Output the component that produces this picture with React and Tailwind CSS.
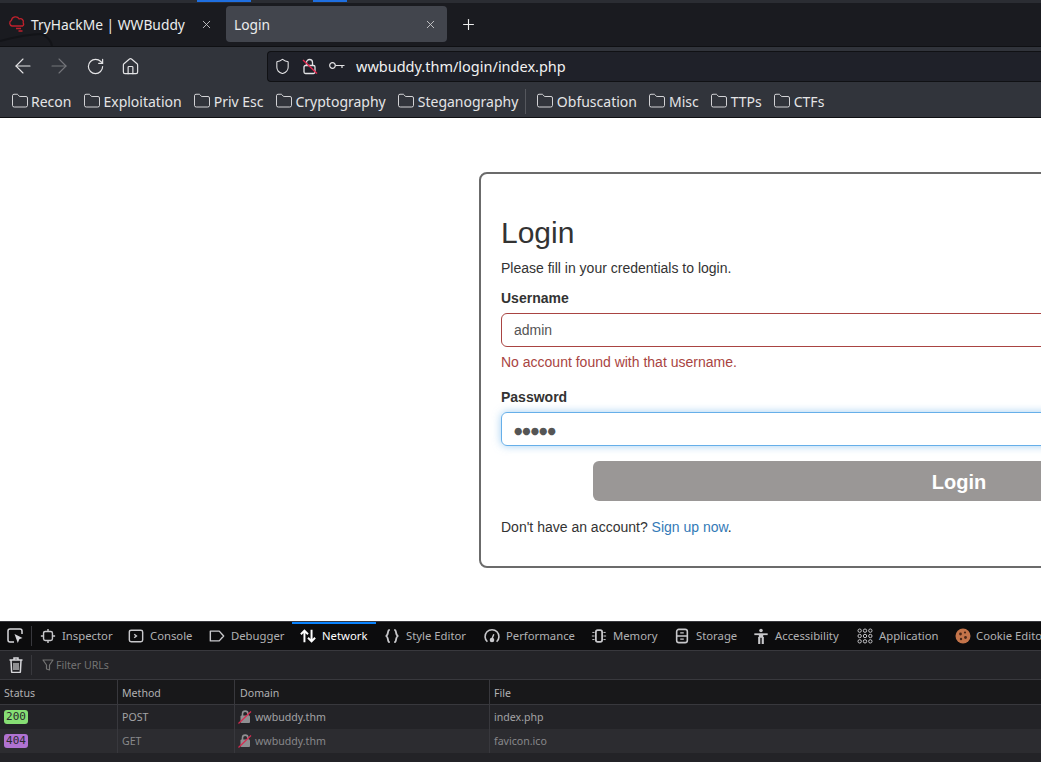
import { X, Plus, ArrowLeft, ArrowRight, RotateCw, Home, Shield, Folder } from 'lucide-react';

const bookmarksLeft = ['Recon', 'Exploitation', 'Priv Esc', 'Cryptography', 'Steganography'];
const bookmarksRight = ['Obfuscation', 'Misc', 'TTPs', 'CTFs'];

const Bookmark = ({ label }) => (
  <div className="flex items-center gap-[2.5px] text-[14px] text-[#e4e4e6]">
    <Folder size={18} strokeWidth={1.2} />
    <span className="pt-px">{label}</span>
  </div>
);

const DevIcon = ({ children }) => (
  <svg width="16" height="16" viewBox="0 0 18 18" fill="none" stroke="currentColor" strokeWidth="1.6" className="shrink-0">
    {children}
  </svg>
);

const tools = [
  { label: 'Inspector', w: 'w-[88px]', icon: <><rect x="4" y="4" width="10" height="10" rx="2" /><path d="M9 1v3M9 14v3M1 9h3M14 9h3" /></> },
  { label: 'Console', w: 'w-[81px]', icon: <><rect x="1.5" y="2.5" width="15" height="13" rx="2" /><path d="M7 7l2.5 2L7 11" /></> },
  { label: 'Debugger', w: 'w-[91px]', icon: <path d="M1.5 3.5h10l5 5.5-5 5.5h-10z" strokeLinejoin="round" /> },
  { label: 'Network', w: 'w-[84px]', active: true, icon: <path d="M5 16V3M1 7l4-4 4 4M13 2v13M9 11l4 4 4-4" strokeWidth="2.2" /> },
  { label: 'Style Editor', w: 'w-[100px]', icon: <path d="M6.5 2C3 2 6 8 2 9c4 1 1 7 4.5 7M11.5 2c3.5 0 .5 6 4.5 7-4 1-1 7-4.5 7" strokeWidth="2" /> },
  { label: 'Performance', w: 'w-[107px]', icon: <><path d="M3.8 15.5A7.8 7.8 0 1 1 14.2 15.5" strokeWidth="1.8" /><path d="M9 12l2-5" /><circle cx="9" cy="13.5" r="1.8" fill="currentColor" /></> },
  { label: 'Memory', w: 'w-[83px]', icon: <><rect x="5.5" y="2.5" width="7" height="13" rx="2" strokeWidth="2" /><path d="M1.5 5H4M1 9h3M1.5 13H4M14 5h2.5M14 9h3M14 13h2.5" strokeWidth="1.1" /></> },
  { label: 'Storage', w: 'w-[79px]', icon: <><rect x="3" y="1.5" width="12" height="15" rx="2.5" strokeWidth="1.8" /><path d="M7 5.5h4M7 12.5h4M3 9h12" /></> },
  { label: 'Accessibility', w: 'w-[104px]', icon: <><circle cx="9" cy="2.8" r="2" fill="currentColor" stroke="none" /><path d="M1.5 7h15" strokeWidth="2" /><path d="M6.5 6.5h5V11h-5z" fill="currentColor" stroke="none" /><path d="M7 10v8M11 10v8" strokeWidth="2.4" /></> },
  { label: 'Application', w: 'w-[98px]', icon: <g strokeWidth="1.1">{[3, 9, 15].map(x => [3, 9, 15].map(y => <circle key={`${x}-${y}`} cx={x} cy={y} r="1.9" />))}</g> },
];

const Row = ({ code, codeClass, method, file, rowClass, textClass }) => (
  <div className={`flex h-6 text-[10.6px] ${rowClass} ${textClass}`}>
    <div className="w-[118px] shrink-0 border-r border-[#38383d] flex items-center pl-1">
      <span className={`w-6 h-[14px] rounded-[3px] flex items-center justify-center text-[#2a2a2e] text-[11px] ${codeClass}`} style={{ fontFamily: '"DejaVu Sans Mono", monospace' }}>{code}</span>
    </div>
    <div className="w-[117px] shrink-0 border-r border-[#38383d] flex items-center pl-1 pt-px">{method}</div>
    <div className="w-[255px] shrink-0 border-r border-[#38383d] flex items-center pl-[3px] gap-[3px]">
      <svg width="14" height="14" viewBox="0 0 14 14" className="shrink-0">
        <rect x="2.5" y="5.5" width="9.5" height="7.5" rx="1" fill="#8f8f92" />
        <path d="M4.5 6V3.8a2.7 2.7 0 0 1 5.4 0V6" fill="none" stroke="#8f8f92" strokeWidth="1.6" />
        <path d="M0.5 13.5L13 1.5" stroke="#d82a50" strokeWidth="1.2" />
      </svg>
      <span className="pt-px">wwbuddy.thm</span>
    </div>
    <div className="flex-1 flex items-center pl-1 pt-px">{file}</div>
  </div>
);

export default function App() {
  return (
    <div className="w-[1041px] h-[762px] overflow-hidden flex flex-col bg-white" style={{ fontFamily: '"Noto Sans", sans-serif' }}>
      {/* panel strip above the window */}
      <div className="h-[3px] shrink-0 bg-[#2b2d33] flex items-start">
        <div className="w-[197px]" />
        <div className="w-[54px] h-[2px] bg-[#1f6fe0]" />
        <div className="w-[62px]" />
        <div className="w-[34px] h-[2px] bg-[#1f6fe0]" />
      </div>
      {/* tab strip */}
      <div className="relative h-[43px] shrink-0 bg-[#1a1b20] flex items-start pt-[3px] text-[13.8px] text-[#eceded]">
        <svg width="60" height="14" viewBox="0 0 60 14" fill="none" stroke="#131418" strokeWidth="2" className="absolute left-0 bottom-0">
          <path d="M0 9C15 5 30 2 42 2c6 3 9 7 10 12" />
        </svg>
        <div className="relative w-[226px] h-9 flex items-center pl-[8px]">
          <svg width="18" height="18" viewBox="0 0 18 18" fill="none" stroke="#c0212c" strokeWidth="1.3" className="shrink-0">
            <path d="M4 11a3 3 0 0 1-.6-5.6 4.2 4.2 0 0 1 7.8-1.4 3 3 0 0 1 4 3.8A2.4 2.4 0 0 1 14.6 11z" />
            <path d="M8 13.5h5M10.5 16h4" />
          </svg>
          <span className="ml-[5px] pt-[2px] whitespace-nowrap">TryHackMe | WWBuddy</span>
          <X size={13} className="absolute left-[200px] text-[#cfcfd2]" strokeWidth={1.6} />
        </div>
        <div className="w-[221px] h-9 rounded-[4px] bg-[#42454d] flex items-center justify-between pl-2 pr-[10px]">
          <span className="pt-[2px]">Login</span>
          <X size={13} className="text-[#cfcfd2]" strokeWidth={1.6} />
        </div>
        <div className="h-9 flex items-center ml-[13px]">
          <Plus size={17} strokeWidth={1.6} />
        </div>
      </div>
      {/* nav toolbar */}
      <div className="h-[39px] shrink-0 bg-[#31343b] border-t border-[#0f1013] flex items-center text-[#e4e4e6]">
        <div className="w-[267px] shrink-0 flex items-center pl-[11px]">
          <ArrowLeft size={24} strokeWidth={1.1} />
          <ArrowRight size={24} strokeWidth={1.1} className="ml-[12px] text-[#74767b]" />
          <RotateCw size={19} strokeWidth={1.5} className="ml-[15px]" />
          <Home size={19} strokeWidth={1.5} className="ml-[16px]" />
        </div>
        <div className="flex-1 h-[31px] bg-[#1f2129] rounded-l-[4px] border-l border-y border-[#101114] flex items-center pl-[6px]">
          <Shield size={17} strokeWidth={1.5} />
          <svg width="16" height="17" viewBox="0 0 16 17" fill="none" stroke="#e4e4e6" strokeWidth="1.3" className="ml-[11px]">
            <rect x="2" y="7.5" width="11" height="8" rx="1.5" />
            <path d="M4.5 7.5V4.5a3 3 0 0 1 6 0V7.5" />
            <path d="M1 2l14 13.5" stroke="#e22850" strokeWidth="1.4" />
          </svg>
          <svg width="16" height="10" viewBox="0 0 16 10" fill="none" stroke="#e4e4e6" strokeWidth="1.2" className="ml-[11px]">
            <circle cx="3.5" cy="4.5" r="2.8" />
            <path d="M6.5 4.5H15.5M13 4.5V7" />
          </svg>
          <span className="ml-[11px] pt-px text-[14.5px] text-[#f1f1f2]">wwbuddy.thm/login/index.php</span>
        </div>
      </div>
      {/* bookmarks */}
      <div className="h-[33px] shrink-0 bg-[#31343b] border-b border-[#0f1013] flex items-center pl-[10.5px]">
        <div className="flex items-center gap-[11.5px]">
          {bookmarksLeft.map(b => <Bookmark key={b} label={b} />)}
        </div>
        <div className="w-px h-[25px] bg-[#55575d] ml-[7px] mr-[10px]" />
        <div className="flex items-center gap-[11.5px]">
          {bookmarksRight.map(b => <Bookmark key={b} label={b} />)}
        </div>
      </div>
      {/* page */}
      <div className="flex-1 min-h-0 overflow-hidden pl-[479px] pt-[54px]" style={{ fontFamily: '"Liberation Sans", Arial, sans-serif' }}>
        <div className="w-[960px] h-[396px] border-2 border-[#6b6b6b] rounded-lg px-5 pt-[37px] text-[14px] leading-5 text-[#333]">
          <h2 className="text-[30px] leading-[44px] text-[#333]">Login</h2>
          <p className="mt-[3px]">Please fill in your credentials to login.</p>
          <label className="block mt-[10px] font-bold">Username</label>
          <div className="mt-[5px] w-[916px] h-[34px] border border-[#a94442] rounded-md flex items-center pl-3 text-[#555]">admin</div>
          <p className="mt-[5px] text-[#a94442]">No account found with that username.</p>
          <label className="block mt-[15px] font-bold">Password</label>
          <div className="mt-[5px] w-[916px] h-[34px] border border-[#66afe9] rounded-md flex items-center pl-3 pt-[3px] text-[#555] shadow-[0_0_8px_rgba(102,175,233,0.6)]">
            <span className="text-[9.6px]" style={{ fontFamily: '"DejaVu Sans", sans-serif' }}>●●●●●</span>
          </div>
          <div className="mt-[15px] ml-[92px] w-[732px] h-10 rounded-md bg-[#9a9796] text-white text-[20px] font-bold flex items-center justify-center pt-px">Login</div>
          <p className="mt-4">Don't have an account? <a className="text-[#337ab7]">Sign up now</a>.</p>
        </div>
      </div>
      {/* devtools */}
      <div className="h-[141px] shrink-0 bg-[#232327] border-t border-[#38383d] flex flex-col" style={{ fontFamily: '"Noto Sans", sans-serif' }}>
        <div className="h-[29px] shrink-0 bg-[#0c0c0d] border-b border-[#38383d] flex items-center text-[11.3px] text-[#b1b1b3]">
          <div className="w-8 shrink-0 flex items-center justify-center border-r border-[#38383d] h-5">
            <svg width="17" height="16" viewBox="0 0 17 16" fill="none" stroke="#d7d7db" strokeWidth="1.5">
              <path d="M7 14H3a2 2 0 0 1-2-2V3a2 2 0 0 1 2-2h10a2 2 0 0 1 2 2v3" />
              <path d="M7.5 6l8 4-3.2 1.2L10.8 15z" fill="#d7d7db" stroke="none" />
            </svg>
          </div>
          {tools.map(t => (
            <div key={t.label} className={`relative ${t.w} h-full shrink-0 flex items-center pl-[8px] gap-[6px] ${t.active ? 'text-white' : ''}`}>
              {t.active && <div className="absolute top-0 left-0 right-0 h-[2px] bg-[#0a84ff]" />}
              <span className={t.active ? 'text-white' : 'text-[#c8c8cb]'}><DevIcon>{t.icon}</DevIcon></span>
              <span className="whitespace-nowrap">{t.label}</span>
            </div>
          ))}
          <div className="h-full min-w-0 flex items-center pl-[8px] gap-[5px]">
            <svg width="16" height="16" viewBox="0 0 16 16" className="shrink-0">
              <circle cx="8" cy="8" r="7.5" fill="#c4744a" />
              <circle cx="5.5" cy="6" r="1.4" fill="#4a2718" />
              <circle cx="10" cy="4.5" r="1.1" fill="#4a2718" />
              <circle cx="10.5" cy="9.5" r="1.4" fill="#4a2718" />
              <circle cx="6" cy="11" r="1.2" fill="#4a2718" />
            </svg>
            <span className="whitespace-nowrap">Cookie Editor</span>
          </div>
        </div>
        <div className="h-[29px] shrink-0 border-b border-[#38383d] flex items-center text-[10.6px] text-[#737373]">
          <div className="w-8 shrink-0 h-5 flex items-center justify-center border-r border-[#38383d]">
            <svg width="14" height="16" viewBox="0 0 14 16" fill="none" stroke="#d7d7db" strokeWidth="1.5">
              <path d="M0.5 3h13M5 3V1h4v2M2 3.5l.6 11a1 1 0 0 0 1 1h6.8a1 1 0 0 0 1-1l.6-11" />
              <path d="M5 6v7M7 6v7M9 6v7" strokeWidth="1.2" />
            </svg>
          </div>
          <svg width="12" height="12" viewBox="0 0 12 12" fill="none" stroke="#737373" strokeWidth="1.2" className="ml-[10px]">
            <path d="M1 1h10L7.5 6v5L4.5 10V6z" strokeLinejoin="round" />
          </svg>
          <span className="ml-[2px] pt-[2px]">Filter URLs</span>
        </div>
        <div className="h-[25px] shrink-0 bg-[#18181a] border-b border-[#38383d] flex text-[10.6px] text-[#b1b1b3]">
          <div className="w-[118px] border-r border-[#38383d] flex items-center pl-1 pt-[3px]">Status</div>
          <div className="w-[117px] border-r border-[#38383d] flex items-center pl-1 pt-[3px]">Method</div>
          <div className="w-[255px] border-r border-[#38383d] flex items-center pl-[5px] pt-[3px]">Domain</div>
          <div className="flex-1 flex items-center pl-1 pt-[3px]">File</div>
        </div>
        <Row code="200" codeClass="bg-[#86de74]" method="POST" file="index.php" rowClass="bg-[#232327]" textClass="text-[#a3a3a6]" />
        <Row code="404" codeClass="bg-[#b072d1]" method="GET" file="favicon.ico" rowClass="bg-[#2c2c30]" textClass="text-[#88888b]" />
      </div>
    </div>
  );
}
